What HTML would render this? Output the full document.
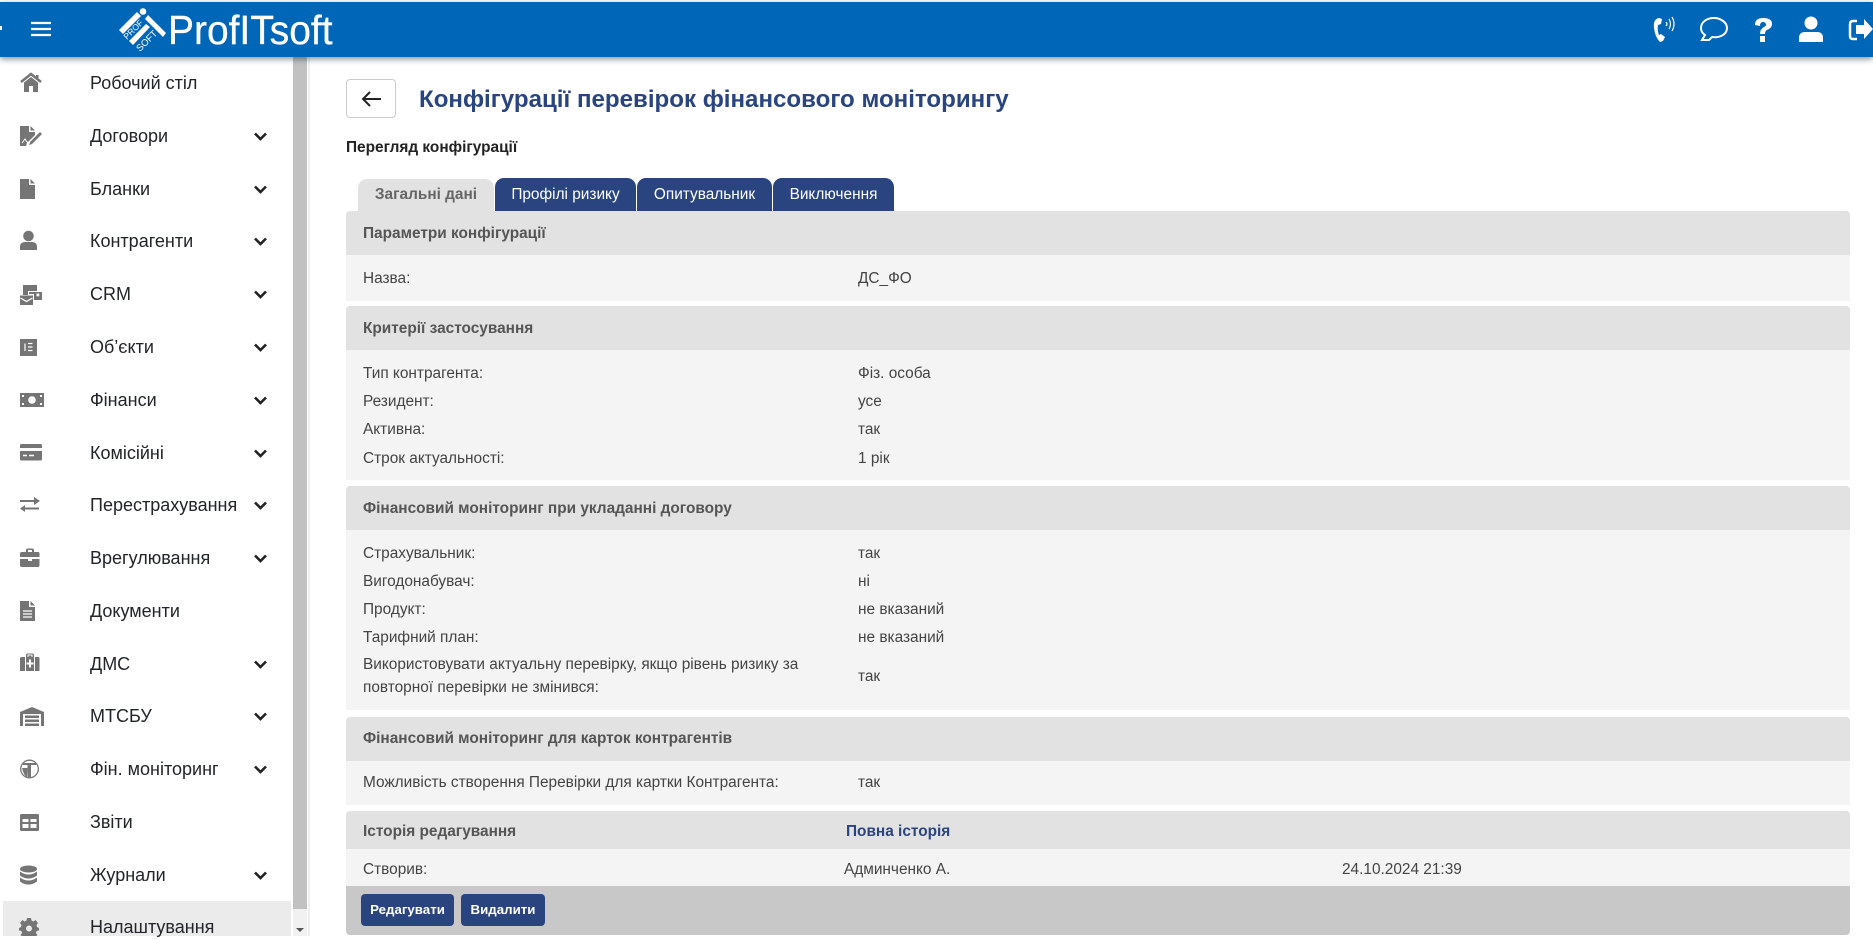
<!DOCTYPE html>
<html lang="uk"><head><meta charset="utf-8"><title>ProfITsoft</title>
<style>
html,body{margin:0;padding:0;width:1873px;height:936px;overflow:hidden;background:#fff;font-family:"Liberation Sans",Arial,sans-serif}
*{box-sizing:border-box}
.a{position:absolute}
.m{position:absolute;left:90px;font-size:18px;line-height:24px;color:#212529;white-space:nowrap}
.t{position:absolute;font-size:15.4px;line-height:20px;color:#444;white-space:nowrap}
.h{position:absolute;font-size:15.4px;line-height:20px;color:#555;font-weight:bold;white-space:nowrap}
.s{position:absolute;left:346px;width:1504px;background:#e2e2e2}
.r{position:absolute;left:346px;width:1504px;background:#f4f4f4}
.tab{position:absolute;top:178px;height:33px;background:#2a4480;color:#fff;border-radius:9px 9px 0 0;font-size:15.4px;line-height:33px;text-align:center;white-space:nowrap}
.b{position:absolute;top:894px;height:32px;background:#2a4480;color:#fff;border-radius:4px;font-size:13.3px;font-weight:bold;line-height:31px;text-align:center}
</style></head><body>

<!-- sidebar -->
<div class="a" style="left:3px;top:901px;width:288px;height:35px;background:#ebebeb"></div>
<div class="a" style="left:293px;top:57px;width:14px;height:879px;background:#f1f1f1"></div>
<div class="a" style="left:293px;top:57px;width:14px;height:852px;background:#c1c1c1"></div>
<div class="a" style="left:308px;top:57px;width:2px;height:879px;background:#efefef"></div>
<svg class="a" style="left:293px;top:920px" width="14" height="16"><path d="M3 8h8l-4 4z" fill="#555"/></svg>

<div class="m" style="top:71px">Робочий стіл</div>
<div class="m" style="top:124px">Договори</div>
<div class="m" style="top:177px">Бланки</div>
<div class="m" style="top:229px">Контрагенти</div>
<div class="m" style="top:282px">CRM</div>
<div class="m" style="top:335px">Об’єкти</div>
<div class="m" style="top:388px">Фінанси</div>
<div class="m" style="top:441px">Комісійні</div>
<div class="m" style="top:493px">Перестрахування</div>
<div class="m" style="top:546px">Врегулювання</div>
<div class="m" style="top:599px">Документи</div>
<div class="m" style="top:652px">ДМС</div>
<div class="m" style="top:704px">МТСБУ</div>
<div class="m" style="top:757px">Фін. моніторинг</div>
<div class="m" style="top:810px">Звіти</div>
<div class="m" style="top:863px">Журнали</div>
<div class="m" style="top:915px">Налаштування</div>

<svg class="a" style="left:0;top:0" width="300" height="936">
<g fill="none" stroke="#222" stroke-width="2.6">
<path d="M255 133.500l5.500 5.500 5.500-5.500"/><path d="M255 186.500l5.500 5.500 5.500-5.500"/><path d="M255 238.500l5.500 5.500 5.500-5.500"/><path d="M255 291.500l5.500 5.500 5.500-5.500"/><path d="M255 344.500l5.500 5.500 5.500-5.500"/><path d="M255 397.500l5.500 5.500 5.500-5.500"/><path d="M255 450.500l5.500 5.500 5.500-5.500"/><path d="M255 502.500l5.500 5.500 5.500-5.500"/><path d="M255 555.500l5.500 5.500 5.500-5.500"/><path d="M255 661.500l5.500 5.500 5.500-5.500"/><path d="M255 713.500l5.500 5.500 5.500-5.500"/><path d="M255 766.500l5.500 5.500 5.500-5.500"/><path d="M255 872.500l5.500 5.500 5.500-5.500"/>
</g>
<g fill="#757575">
<g transform="translate(20,83)"><path d="M1 -1L11 -9L21 -1" fill="none" stroke="#757575" stroke-width="2.600"/><path d="M4 -0.500L11 -6L18 -0.500V9H13V3H9V9H4Z"/><rect x="16" y="-8" width="2.500" height="4"/></g>
<g transform="translate(20,136)"><path d="M0 -10H9V-4H15V-1L7 7L6 10H0Z"/><path d="M10.500 -10L15 -5.500H10.500Z"/><path d="M10 6L20 -4L22 -2L12 8L9 9Z"/><path d="M2 7L5 3L7 6L10 7" fill="none" stroke="#fff" stroke-width="1"/></g>
<g transform="translate(20,189)"><path d="M0 -10H9V-4H15V10H0Z"/><path d="M10.500 -10L15 -5.500H10.500Z"/></g>
<g transform="translate(20,241)"><circle cx="8.500" cy="-5" r="5.300"/><path d="M0 9V6Q0 1 5 1H12Q17 1 17 6V9Z"/></g>
<g transform="translate(20,294)"><path d="M3 -9H17V-3H8V1H3Z"/><path d="M9 -2H22V6H14V0H9Z"/><rect x="16.500" y="-0.500" width="2.800" height="2.800" fill="#fff"/><path d="M0 1.500H13V11H0Z"/><path d="M0.500 4L6.500 7.500L12.500 4" fill="none" stroke="#fff" stroke-width="1.300"/></g>
<g transform="translate(20,347)"><rect x="0" y="-8" width="17" height="17"/><path d="M5 -3.500V4M8 -3.500H12.500M8 0H12.500M8 3.500H12.500" stroke="#fff" stroke-width="1.200" fill="none"/></g>
<g transform="translate(20,400)"><rect x="0" y="-7" width="24" height="14"/><circle cx="12" cy="0" r="3.800" fill="#fff"/><path d="M2 -5h2v2h-2zM20 -5h2v2h-2zM2 3h2v2h-2zM20 3h2v2h-2z" fill="#fff"/></g>
<g transform="translate(20,453)"><path d="M1.500 -9H20.500Q22 -9 22 -7.500V-5H0V-7.500Q0 -9 1.500 -9Z"/><path d="M0 -2H22V6Q22 7.500 20.500 7.500H1.500Q0 7.500 0 6Z"/><path d="M3 2.500H7M9 2.500H14" stroke="#fff" stroke-width="1.500"/></g>
<g transform="translate(20,505)"><rect x="0" y="-5" width="16" height="2"/><rect x="3" y="2.500" width="16" height="2"/><path d="M5 0L0 3.500L5 7Z"/><path d="M14 -8L20 -4L14 0Z"/></g>
<g transform="translate(20,558)"><path d="M6 -6V-8Q6 -9.500 8 -9.500H12Q14 -9.500 14 -8V-6H18Q19.500 -6 19.500 -4.500V-1H0V-4.500Q0 -6 2 -6ZM8 -6H12V-8H8Z"/><path d="M0 1H8V3H12V1H19.500V7Q19.500 9 18 9H2Q0 9 0 7Z"/></g>
<g transform="translate(20,611)"><path d="M0 -10H9V-4H15V10H0Z"/><path d="M10.500 -10L15 -5.500H10.500Z"/><path d="M3 0H12M3 3H12M3 6H12" stroke="#fff" stroke-width="1.200"/></g>
<g transform="translate(20,663)"><path d="M6 -6V-8Q6 -9.500 8 -9.500H12Q14 -9.500 14 -8V-6H5V8H0V-4Q0 -6 2 -6Z M15 -6H18Q19.500 -6 19.500 -4V8H15Z"/><rect x="6" y="-6" width="8" height="14"/><path d="M10 -3.500V4.500M6.500 .5H13.500" stroke="#fff" stroke-width="2"/><path d="M8 -6V-8H12V-6" stroke="#fff" stroke-width="1" fill="none"/></g>
<g transform="translate(20,716)"><path d="M0 10V-4L12 -9L24 -4V10H21V-2H3V10Z"/><path d="M5 -0.500H19V2H5ZM5 3.500H19V6H5ZM5 7.500H19V10H5Z"/></g>
<g transform="translate(20,769)"><circle cx="9.500" cy="0" r="8.800" fill="none" stroke="#757575" stroke-width="1.300"/><path d="M3 -6H16V-4H11V8H7.500V-4H3Z"/><path d="M2 -1Q4 7 7 8L7.500 -1Z"/></g>
<g transform="translate(20,822)"><rect x="0" y="-8" width="19" height="17" rx="1.500"/><path d="M2.500 -3H8.500V0H2.500ZM10.500 -3H16.500V0H10.500ZM2.500 2H8.500V6H2.500ZM10.500 2H16.500V6H10.500Z" fill="#fff"/></g>
<g transform="translate(20,875)"><ellipse cx="8.500" cy="-6" rx="8.500" ry="3.500"/><path d="M0 -3.500Q4 -0.500 8.500 -0.500Q13 -0.500 17 -3.500V0.500Q13 3.500 8.500 3.500Q4 3.500 0 0.500Z"/><path d="M0 2.500Q4 5.500 8.500 5.500Q13 5.500 17 2.500V6.500Q13 9.500 8.500 9.500Q4 9.500 0 6.500Z"/></g>
<g transform="translate(20,927)"><path fill-rule="evenodd" d="M7 -9H11L11.500 -6.500L13.500 -5.500L15.500 -7L18 -4L16.500 -2L17 0L19 1V3.500L16.500 4L16 6L17.500 8L15 10L13 9L11 10L10.500 12H7.500L7 10L5 9L3 10L.5 8L2 6L1.500 4L-1 3.500V1L1 0L1.500 -2L0 -4L2.500 -7L4.500 -5.500L6.500 -6.500ZM9 -1.500A3 3 0 1 0 9 4.500A3 3 0 1 0 9 -1.500Z"/></g>
</g>
</svg>

<!-- header -->
<div class="a" style="left:0;top:2px;width:1873px;height:55px;background:#0066b8;box-shadow:0 2px 6px rgba(0,0,0,.45)"></div>
<div class="a" style="left:0;top:26px;width:2px;height:4px;background:#fff"></div>
<svg class="a" style="left:0;top:0" width="350" height="60">
<path d="M31 23H51M31 29H51M31 35H51" stroke="#fff" stroke-width="2.200"/>
<g fill="#fff">
<circle cx="143" cy="11.500" r="3.300"/>
<path d="M119 30L137 12L141 16L123 34Z"/>
<path d="M145 19L148 15L166 33L163 37Z"/>
<path d="M129 41L146 24L150 27L133 45Z"/>
<text transform="translate(127,40) rotate(-45)" font-family="Liberation Sans" font-size="8.500">PROF</text>
<text transform="translate(140,52) rotate(-45)" font-family="Liberation Sans" font-size="9.500">SOFT</text>
</g>
</svg>
<div class="a" style="left:168px;top:6px;font-size:41px;line-height:48px;color:#fff;transform:scaleX(.95);transform-origin:0 0;white-space:nowrap;-webkit-text-stroke:.3px #fff">ProfITsoft</div>
<svg class="a" style="left:1640px;top:0" width="233" height="60" fill="#fff">
<path d="M19 18Q13 19 14 28Q15 37 20 42L23 41L25 37L21 34L19 35Q17 30 18 25L21 24L22 19Z"/>
<path d="M26 22Q28 24 26 26M29 19Q32 24 29 29M32 17Q36 24 32 31" fill="none" stroke="#fff" stroke-width="1.200"/>
<path d="M74 18C80 18 87 22 87 28C87 35 79 38 72 37L69 40H62L65 35C62 33 61 31 61 28C61 22 67 18 74 18Z" fill="none" stroke="#fff" stroke-width="2"/>
<path d="M115 25Q115 18 123 18Q132 18 132 24Q132 28 127 30Q125 31 125 34H120Q120 29 124 27Q127 25 126 24Q125 22 123 22Q120 22 120 26ZM120 36H125V42H120Z"/>
<circle cx="171" cy="23" r="6.500"/><path d="M159 42V38Q159 32 165 32H177Q183 32 183 38V42Z"/>
<path d="M217 21H213Q210 21 210 24V36Q210 39 213 39H217" fill="none" stroke="#fff" stroke-width="2.500"/>
<path d="M216 25H224V19L233 29L224 39V34H216Z"/>
</svg>

<!-- content heading -->
<div class="a" style="left:346px;top:79px;width:50px;height:39px;border:1px solid #ccc;border-radius:4px;background:#fff"></div>
<svg class="a" style="left:346px;top:79px" width="50" height="39"><path d="M17 20H35M24 13L17 20L24 27" fill="none" stroke="#222" stroke-width="2"/></svg>
<div class="a" style="left:419px;top:85px;font-size:24.1px;line-height:30px;font-weight:bold;color:#2a4480;white-space:nowrap">Конфігурації перевірок фінансового моніторингу</div>
<div class="a" style="left:346px;top:136px;padding-top:2px;font-size:15.4px;line-height:20px;font-weight:bold;color:#222;white-space:nowrap">Перегляд конфігурації</div>

<!-- tabs -->
<div class="a" style="left:358px;top:179px;width:136px;height:32px;background:#e2e2e2;border-radius:9px 9px 0 0;color:#666;font-size:15.4px;font-weight:bold;line-height:32px;text-align:center;white-space:nowrap">Загальні дані</div>
<div class="tab" style="left:495px;width:141px">Профілі ризику</div>
<div class="tab" style="left:637px;width:135px">Опитувальник</div>
<div class="tab" style="left:773px;width:121px">Виключення</div>

<!-- sections -->
<div class="s" style="top:211px;height:44px;border-radius:4px 4px 0 0"></div>
<div class="r" style="top:255px;height:46px"></div>
<div class="s" style="top:306px;height:44px;border-radius:4px 4px 0 0"></div>
<div class="r" style="top:350px;height:130px"></div>
<div class="s" style="top:486px;height:44px;border-radius:4px 4px 0 0"></div>
<div class="r" style="top:530px;height:180px"></div>
<div class="s" style="top:717px;height:44px;border-radius:4px 4px 0 0"></div>
<div class="r" style="top:761px;height:44px"></div>
<div class="s" style="top:811px;height:38px;border-radius:4px 4px 0 0"></div>
<div class="r" style="top:849px;height:37px"></div>
<div class="a" style="left:346px;top:886px;width:1504px;height:49px;background:#c8c8c8;border-radius:0 0 4px 4px"></div>

<div class="h" style="left:363px;top:224px">Параметри конфігурації</div>
<div class="t" style="left:363px;top:269px">Назва:</div><div class="t" style="left:858px;top:269px">ДС_ФО</div>

<div class="h" style="left:363px;top:319px">Критерії застосування</div>
<div class="t" style="left:363px;top:364px">Тип контрагента:</div><div class="t" style="left:858px;top:364px">Фіз. особа</div>
<div class="t" style="left:363px;top:392px">Резидент:</div><div class="t" style="left:858px;top:392px">усе</div>
<div class="t" style="left:363px;top:420px">Активна:</div><div class="t" style="left:858px;top:420px">так</div>
<div class="t" style="left:363px;top:449px">Строк актуальності:</div><div class="t" style="left:858px;top:449px">1 рік</div>

<div class="h" style="left:363px;top:499px">Фінансовий моніторинг при укладанні договору</div>
<div class="t" style="left:363px;top:544px">Страхувальник:</div><div class="t" style="left:858px;top:544px">так</div>
<div class="t" style="left:363px;top:572px">Вигодонабувач:</div><div class="t" style="left:858px;top:572px">ні</div>
<div class="t" style="left:363px;top:600px">Продукт:</div><div class="t" style="left:858px;top:600px">не вказаний</div>
<div class="t" style="left:363px;top:628px">Тарифний план:</div><div class="t" style="left:858px;top:628px">не вказаний</div>
<div class="t" style="left:363px;top:655px">Використовувати актуальну перевірку, якщо рівень ризику за</div>
<div class="t" style="left:363px;top:678px">повторної перевірки не змінився:</div>
<div class="t" style="left:858px;top:667px">так</div>

<div class="h" style="left:363px;top:729px">Фінансовий моніторинг для карток контрагентів</div>
<div class="t" style="left:363px;top:773px">Можливість створення Перевірки для картки Контрагента:</div><div class="t" style="left:858px;top:773px">так</div>

<div class="h" style="left:363px;top:822px">Історія редагування</div>
<div class="h" style="left:846px;top:822px;color:#2a4480">Повна історія</div>
<div class="t" style="left:363px;top:860px">Створив:</div>
<div class="t" style="left:844px;top:860px">Админченко А.</div>
<div class="t" style="left:1342px;top:860px">24.10.2024 21:39</div>

<div class="b" style="left:361px;width:93px">Редагувати</div>
<div class="b" style="left:461px;width:84px">Видалити</div>
</body></html>
